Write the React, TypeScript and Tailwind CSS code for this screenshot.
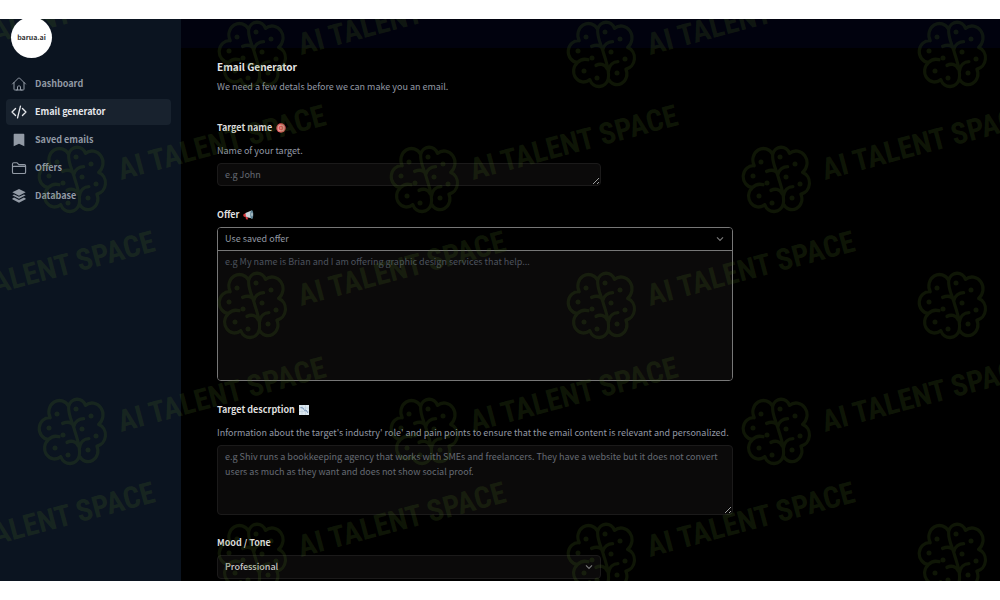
import React from "react";
import { HiOutlineHome } from "react-icons/hi2";

const nav = [
  { label: "Dashboard", icon: "home" },
  { label: "Email generator", icon: "code" },
  { label: "Saved emails", icon: "bookmark" },
  { label: "Offers", icon: "folder" },
  { label: "Database", icon: "layers" },
];

function NavIcon({ name }: { name: string }) {
  if (name === "home") return <HiOutlineHome className="size-4 shrink-0" aria-hidden="true" />;
  return (
    <svg viewBox="0 0 24 24" className="size-4 shrink-0" fill="none" stroke="currentColor" strokeWidth="1.7" strokeLinecap="round" strokeLinejoin="round" aria-hidden="true">
      {name === "code" && <path d="M17.2 6.8 22.4 12l-5.2 5.2M6.8 17.2 1.6 12l5.2-5.2M14.2 3.2 9.8 20.8" strokeWidth="2" />}
      {name === "bookmark" && <path d="M5.2 2.8h13.6c.9 0 1.2.4 1.2 1.2v17.2l-8-3.6-8 3.6V4c0-.8.3-1.2 1.2-1.2z" fill="currentColor" stroke="none" />}
      {name === "folder" && <path d="M2.2 12.3V6.2c0-1.2.8-2 2-2h5l2.6 2.7H20c1.1 0 1.9.8 1.9 1.9v9.4c0 1.2-.8 2-2 2H4.2c-1.2 0-2-.8-2-2v-6.8c0-1.1.8-1.9 1.9-1.9h15.9c1.1 0 1.9.6 1.9 1.5" />}
      {name === "layers" && (
        <g fill="currentColor" stroke="none">
          <path d="M12 1.5 22 6.5 12 11.5 2 6.5z" />
          <path d="m4.6 9.6 7.4 3.7 7.4-3.7L22 11l-10 5-10-5z" />
          <path d="m4.6 14.2 7.4 3.7 7.4-3.7L22 15.6v1.2l-10 5.4-10-5.4v-1.2z" />
        </g>
      )}
    </svg>
  );
}

function TargetIcon() {
  return (
    <svg viewBox="0 0 20 20" className="size-[10px]" aria-hidden="true">
      <circle cx="10" cy="10" r="9.5" fill="#d9565a" />
      <circle cx="10" cy="10" r="7" fill="#e59a94" />
      <circle cx="10" cy="10" r="4.6" fill="#d9565a" />
      <circle cx="10" cy="10" r="1.8" fill="#e59a94" />
    </svg>
  );
}

function MegaphoneIcon() {
  return (
    <svg viewBox="0 0 22 20" className="h-[10px] w-[11px]" aria-hidden="true">
      <path d="M1 8.5 6 6v8l-4-.5c-1.5-.8-1.8-3.5-1-5z" fill="#d8383d" />
      <path d="m5 6 12-5 2 16L6 14z" fill="#c6d3da" />
      <path d="m5 13 4 1 1 5-4-.5z" fill="#d8383d" />
      <ellipse cx="17.5" cy="9" rx="3" ry="8.5" fill="#5b8192" />
      <ellipse cx="18" cy="9" rx="1.2" ry="4" fill="#cfd8dc" />
    </svg>
  );
}

function ChartIcon() {
  return (
    <svg viewBox="0 0 20 20" className="size-[10px]" aria-hidden="true">
      <path d="M0 0h20v20H0z" fill="#dce8f0" />
      <path d="M0 6h20M0 13h20M6 0v20M13 0v20" stroke="#b4c9d8" />
      <path d="m3 5 5 1 3 5 3-1 4 6" fill="none" stroke="#7a96ba" strokeWidth="2" />
    </svg>
  );
}

function Chevron() {
  return (
    <svg viewBox="0 0 12 12" className="pointer-events-none absolute right-2 top-1/2 size-2 -translate-y-1/2 text-[#777]" fill="none" stroke="currentColor" strokeWidth="1.8" aria-hidden="true">
      <path d="m1.5 3.5 4.5 4.5 4.5-4.5" />
    </svg>
  );
}

const marks = [
  [-98, 55], [253, 55], [602, 55], [953, 55],
  [-279, 180], [73, 180], [425, 180], [777, 180],
  [-98, 306], [253, 306], [602, 306], [953, 306],
  [-279, 432], [73, 432], [425, 432], [777, 432],
  [-98, 557], [253, 557], [602, 557], [953, 557],
];

const dots = [[-16, -18], [3, -23], [18, -16], [-24, -4], [-10, 3], [9, -3], [23, 4], [-18, 16], [-5, 23], [15, 18]];

function Watermark() {
  return (
    <svg className="pointer-events-none absolute inset-0 h-full w-full text-[#4c7020]/20" aria-hidden="true">
      <defs>
        <g id="brand-mark">
          <path
            transform="translate(1 -1) scale(.88 .95)"
            d="M-6-26A10 10 0 0 1 13-27A11 11 0 0 1 28-7A12 12 0 0 1 26 16A11 11 0 0 1 6 26A11 11 0 0 1-15 27A11 11 0 0 1-29 9A11 11 0 0 1-27-14A11 11 0 0 1-6-26C-7-18-3-12 0-3C3 7 8 17 6 26M0-5C-3-10-8-10-13-8M0-5C1-10 6-13 11-13M5 16C2 10-4 10-8 12M6 19C7 11 12 8 17 8M-29 9C-25 5-21 5-17 6"
            fill="none" stroke="currentColor" strokeWidth="3.6" strokeLinecap="round" strokeLinejoin="round"
          />
          {dots.map(([x, y]) => <circle key={`${x}/${y}`} cx={x} cy={y} r="2.5" fill="currentColor" />)}
          <text x="0" y="0" transform="translate(48 0) rotate(-15)" fill="currentColor" className="font-['Roboto_Condensed','Open_Sans_Condensed',sans-serif] text-[30px] font-bold">AI TALENT SPACE</text>
        </g>
      </defs>
      {marks.map(([x, y]) => <use key={`${x}/${y}`} href="#brand-mark" x={x} y={y - 19} />)}
    </svg>
  );
}

const label = "flex items-center gap-1 text-[9px] leading-4 font-bold text-[#dedede]";
const hint = "text-[9px] leading-4 text-[#9298a4]";
const field = "block w-full border border-[#1b1a1a] bg-[#0b0a0a] px-[7px] text-[9px] placeholder:text-[#666a74] outline-none";

export default function App() {
  return (
    <div className="min-h-screen bg-white py-[19px] font-['Noto_Sans_CJK_SC','Noto_Sans',sans-serif]">
      <div className="relative flex h-[calc(100vh-38px)] overflow-hidden bg-black">
        <aside className="w-[181px] shrink-0 bg-[#0b1420] px-[6px]">
          <a href="#home" className="relative z-10 -mt-[2px] ml-[5px] flex size-[41px] items-center justify-center rounded-full bg-white text-[7px] font-bold text-[#333]">barua.ai</a>
          <nav className="mt-[13px] mr-1 flex flex-col gap-[2px]" aria-label="Main">
            {nav.map((item, i) => (
              <a key={item.label} href={`#${item.icon}`} aria-current={i === 1 ? "page" : undefined} className={i === 1 ? "flex h-[26px] items-center gap-2 rounded bg-[#18222e] px-[5px] text-[9px] font-bold text-[#e5e7eb]" : "flex h-[26px] items-center gap-2 rounded px-[5px] text-[9px] font-bold text-[#929aa5]"}>
                <NavIcon name={item.icon} />
                {item.label}
              </a>
            ))}
          </nav>
        </aside>
        <div className="min-w-0 flex-1">
          <header className="h-[29px] bg-[#01020e]" />
          <main className="max-w-[588px] px-9">
            <h1 className="pt-[11px] text-[10px] leading-4 font-bold text-[#e8e8e8]">Email Generator</h1>
            <p className={`mt-1 ${hint}`}>We need a few detals before we can make you an email.</p>

            <form>
              <label htmlFor="name" className={`mt-[25px] ${label}`}>Target name <TargetIcon /></label>
              <p className={`mt-[7px] ${hint}`}>Name of your target.</p>
              <textarea id="name" rows={1} placeholder="e.g John" className={`mt-1 h-[23px] max-w-[384px] resize overflow-hidden rounded-sm py-[3px] leading-4 ${field}`} />

              <label htmlFor="offer" className={`mt-[21px] ${label}`}>Offer <MegaphoneIcon /></label>
              <div className="mt-1 overflow-hidden rounded border border-[#777]">
                <div className="relative border-b border-[#777]">
                  <select id="offer" className="block h-[22px] w-full appearance-none bg-black px-[7px] text-[9px] text-[#9298a2] outline-none">
                    <option>Use saved offer</option>
                  </select>
                  <Chevron />
                </div>
                <textarea aria-label="Offer details" placeholder="e.g My name is Brian and I am offering graphic design services that help..." className="block h-[129px] w-full resize-none bg-[#0b0a0a] px-[7px] py-[3px] text-[9px] leading-4 outline-none placeholder:text-[#4c525d]" />
              </div>

              <label htmlFor="description" className={`mt-[21px] ${label}`}>Target descrption <ChartIcon /></label>
              <p className={`mt-[7px] ${hint}`}>Information about the target's industry' role' and pain points to ensure that the email content is relevant and personalized.</p>
              <textarea id="description" placeholder="e.g Shiv runs a bookkeeping agency that works with SMEs and freelancers. They have a website but it does not convert users as much as they want and does not show social proof." className={`mt-1 h-[70px] resize rounded py-[3px] leading-[15px] ${field}`} />

              <label htmlFor="mood" className={`mt-5 ${label}`}>Mood / Tone</label>
              <div className="relative mt-1 max-w-[384px]">
                <select id="mood" className={`h-6 appearance-none rounded-sm font-medium text-[#c8c8c8] ${field}`}>
                  <option>Professional</option>
                </select>
                <Chevron />
              </div>
            </form>
          </main>
        </div>
        <Watermark />
      </div>
    </div>
  );
}
